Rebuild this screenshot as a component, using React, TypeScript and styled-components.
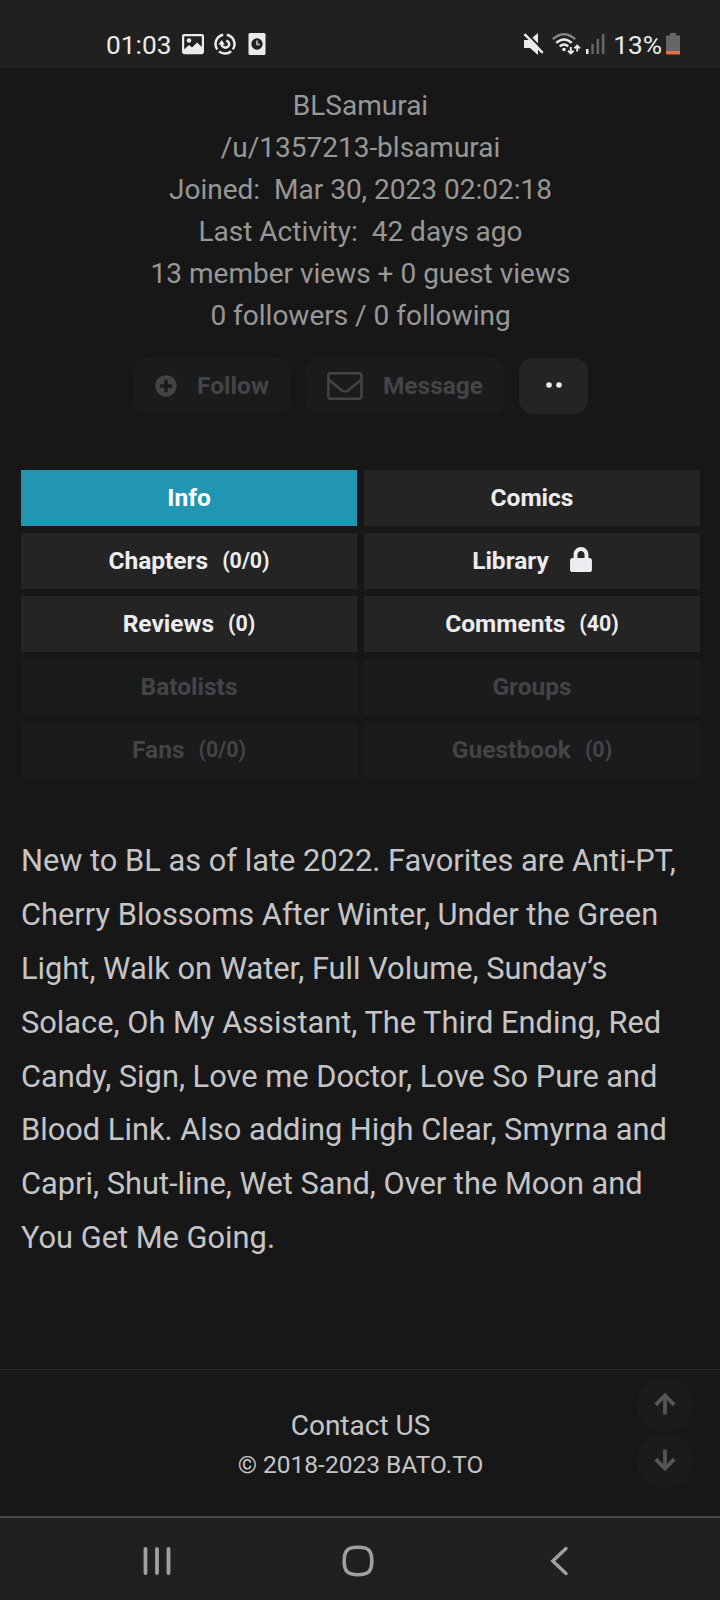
import React from "react";
import styled, { createGlobalStyle, css } from "styled-components";
import { FaLock, FaPlusCircle } from "react-icons/fa";

const GlobalStyle = createGlobalStyle`
  * { box-sizing: border-box; }
  body { margin: 0; background: #171717; font-family: Roboto, sans-serif; }
  button { font: inherit; border: 0; padding: 0; margin: 0; }
`;

const Screen = styled.div`
  width: 720px;
  height: 1600px;
  display: flex;
  flex-direction: column;
  background: #171717;
  position: relative;
  overflow: hidden;
`;

const StatusBar = styled.header`
  height: 68px;
  flex: none;
  background: #202020;
  color: #ebebeb;
  display: flex;
  justify-content: space-between;
  align-items: flex-start;
  padding: 30px 40px 0 106px;
`;

const StatusGroup = styled.div`
  display: flex;
  align-items: center;
  height: 28px;
  svg { display: block; flex: none; }
`;

const StatusIcon = styled.span<{ $left?: number }>`
  display: block;
  margin-left: ${(p) => p.$left ?? 0}px;
`;

const StatusText = styled.span<{ $left?: number }>`
  font-size: 26.3px;
  line-height: 30px;
  padding-top: 2px;
  margin-left: ${(p) => p.$left ?? 0}px;
`;

const Profile = styled.section`
  padding: 17px 0 0 1px;
  text-align: center;
  color: #979797;
  font-size: 28px;
  line-height: 42px;
  white-space: pre;
`;

const ProfileLine = styled.div``;

const Actions = styled.div`
  display: flex;
  justify-content: center;
  gap: 14px;
  margin-top: 21px;
`;

const ActionButton = styled.button<{ $width: number; $muted?: boolean }>`
  width: ${(p) => p.$width}px;
  height: 56px;
  border-radius: 14px;
  display: flex;
  align-items: center;
  justify-content: center;
  gap: 20px;
  padding-left: 1px;
  font-size: 24.5px;
  font-weight: 700;
  background: ${(p) => (p.$muted ? "#1a1b1c" : "#242424")};
  color: ${(p) => (p.$muted ? "#444446" : "#ececf1")};
`;

const ActionLabel = styled.span`
  padding-bottom: 2px;
`;

const Dots = styled.svg`
  margin-bottom: 2px;
`;

const Tabs = styled.nav`
  display: grid;
  grid-template-columns: 1fr 1fr;
  gap: 7px;
  margin: 56px 20px 0 21px;
`;

const Tab = styled.button<{ $state: "active" | "normal" | "muted" }>`
  height: 56px;
  display: flex;
  align-items: center;
  justify-content: center;
  padding-bottom: 2px;
  font-size: 24.5px;
  font-weight: 700;
  ${(p) =>
    p.$state === "active"
      ? css`background: #2196b3; color: #fff;`
      : p.$state === "normal"
      ? css`background: #242424; color: #ececf1;`
      : css`background: #1a1b1c; color: #444446;`}
`;

const Count = styled.span`
  font-size: 21.4px;
  font-weight: 700;
  margin-left: 14px;
`;

const LockIcon = styled(FaLock)`
  width: 22px;
  height: 25px;
  margin: 0 0 1px 21px;
`;

const Bio = styled.p`
  margin: 55.95px 21px 0;
  font-size: 30.8px;
  line-height: 53.9px;
  color: #c5c5c8;
  white-space: nowrap;
`;

const Footer = styled.footer`
  margin-top: 104px;
  border-top: 1px solid #292929;
  flex: 1;
  display: flex;
  flex-direction: column;
  align-items: center;
  padding: 35px 0 0 1px;
  color: #c5c5c8;
`;

const ContactLink = styled.div`
  font-size: 28px;
  line-height: 42px;
`;

const Copyright = styled.div`
  font-size: 24.5px;
  line-height: 36px;
`;

const ScrollButtons = styled.div`
  position: absolute;
  right: 27px;
  top: 1377px;
  display: flex;
  flex-direction: column;
`;

const ScrollButton = styled.button`
  width: 56px;
  height: 56px;
  border-radius: 50%;
  background: #1b1b1b;
  display: flex;
  align-items: center;
  justify-content: center;
  padding-bottom: 2px;
`;

const NavBar = styled.nav`
  height: 84px;
  flex: none;
  border-top: 2px solid #474747;
  background: #202020;
  display: grid;
  grid-template-columns: 199px 207px 1fr;
  align-items: center;
  padding: 4px 0 0 143px;
  svg { display: block; }
`;

const profileLines = [
  "BLSamurai",
  "/u/1357213-blsamurai",
  "Joined:  Mar 30, 2023 02:02:18",
  "Last Activity:  42 days ago",
  "13 member views + 0 guest views",
  "0 followers / 0 following",
];

type TabItem = {
  label: string;
  count?: string;
  locked?: boolean;
  state: "active" | "normal" | "muted";
};

const tabs: TabItem[] = [
  { label: "Info", state: "active" },
  { label: "Comics", state: "normal" },
  { label: "Chapters", count: "(0/0)", state: "normal" },
  { label: "Library", locked: true, state: "normal" },
  { label: "Reviews", count: "(0)", state: "normal" },
  { label: "Comments", count: "(40)", state: "normal" },
  { label: "Batolists", state: "muted" },
  { label: "Groups", state: "muted" },
  { label: "Fans", count: "(0/0)", state: "muted" },
  { label: "Guestbook", count: "(0)", state: "muted" },
];

const bioLines = [
  "New to BL as of late 2022. Favorites are Anti-PT,",
  "Cherry Blossoms After Winter, Under the Green",
  "Light, Walk on Water, Full Volume, Sunday’s",
  "Solace, Oh My Assistant, The Third Ending, Red",
  "Candy, Sign, Love me Doctor, Love So Pure and",
  "Blood Link. Also adding High Clear, Smyrna and",
  "Capri, Shut-line, Wet Sand, Over the Moon and",
  "You Get Me Going.",
];

const PictureIcon = () => (
  <svg width="22" height="22" viewBox="0 0 22 22">
    <rect x="1.1" y="2.1" width="19.8" height="18" rx="1" fill="none" stroke="#ebebeb" strokeWidth="2.2" />
    <circle cx="7" cy="7.5" r="2.3" fill="#ebebeb" />
    <path d="M2 16.5L7 12L10 14.5L15 9.5L20.5 14.5V20H2Z" fill="#ebebeb" />
  </svg>
);

const SwirlIcon = () => (
  <svg width="22" height="22" viewBox="0 0 22 22" fill="none" stroke="#ebebeb">
    <path d="M9.2 1.7A9.5 9.5 0 0 0 3.3 16.5" strokeWidth="2.5" />
    <path d="M5 18.4A9.5 9.5 0 0 0 17.2 18.2" strokeWidth="2.5" />
    <path d="M12.8 1.7A9.5 9.5 0 0 1 18.8 16.4" strokeWidth="2.5" />
    <path d="M7.5 11A4 4 0 0 0 15 12.5Q15.8 9 12.2 7.6" strokeWidth="2.5" />
    <path d="M4.2 11.5L7.7 7L10.8 11.5Z" fill="#ebebeb" stroke="none" />
  </svg>
);

const ClockCardIcon = () => (
  <svg width="18" height="22" viewBox="0 0 18 22">
    <rect x="0.5" width="17" height="22" rx="1.5" fill="#ebebeb" />
    <circle cx="9" cy="11" r="5.7" fill="#202020" />
    <path d="M9 7.5V11.5H12" fill="none" stroke="#bdbdbd" strokeWidth="1.7" />
  </svg>
);

const MuteIcon = () => (
  <svg width="20" height="22" viewBox="0 0 20 22">
    <path d="M0 7H5.5L14 0V22L6 15H0Z" fill="#ebebeb" />
    <path d="M1.5 -1L21 19" stroke="#202020" strokeWidth="2" />
    <path d="M0.5 1L18.7 19.8" stroke="#ebebeb" strokeWidth="2.5" />
  </svg>
);

const WifiIcon = () => (
  <svg width="29" height="23" viewBox="0 0 29 23" fill="none" strokeWidth="2.3">
    <path d="M0.8 6.2Q12 -3.7 23.2 6.2" stroke="#858585" />
    <path d="M4.2 9.9Q12 3 19.8 9.9" stroke="#ebebeb" />
    <path d="M7.7 13.3Q12 9.6 16.3 13.3" stroke="#ebebeb" />
    <circle cx="12" cy="16.5" r="1.8" fill="#ebebeb" />
    <path d="M18.8 14V20M16 17.8L18.8 20.5L21.6 17.8" stroke="#ebebeb" strokeWidth="1.9" />
    <path d="M25.2 18.5V13M22.4 15.3L25.2 12.5L28 15.3" stroke="#ebebeb" strokeWidth="1.9" />
  </svg>
);

const SignalIcon = () => (
  <svg width="19" height="22" viewBox="0 0 19 22">
    <rect x="0" y="16" width="2.5" height="5" fill="#ebebeb" />
    <rect x="5.3" y="11" width="2.5" height="10" fill="#666" />
    <rect x="10.6" y="6" width="2.5" height="15" fill="#666" />
    <rect x="15.9" y="1" width="2.5" height="20" fill="#666" />
  </svg>
);

const BatteryIcon = () => (
  <svg width="14" height="22" viewBox="0 0 14 22">
    <path d="M4 0H10V2.5H13Q14 2.5 14 3.5V18H0V3.5Q0 2.5 1 2.5H4Z" fill="#666" />
    <path d="M0 18H14V20.5Q14 21.5 13 21.5H1Q0 21.5 0 20.5Z" fill="#e2704a" />
  </svg>
);

const EnvelopeIcon = () => (
  <svg width="36" height="28" viewBox="0 0 36 28" fill="none" stroke="currentColor" strokeWidth="2.5">
    <rect x="1.3" y="1.3" width="33.2" height="25.4" rx="2.4" />
    <path d="M1.5 7.5L14.2 18Q17.9 21 21.6 18L34.3 7.5" />
  </svg>
);

const ArrowIcon = ({ down = false }: { down?: boolean }) => (
  <svg width="22" height="24" viewBox="0 0 22 24" fill="none" stroke="#555" strokeWidth="3.8">
    {down ? <path d="M11 1.5V20.5M1.7 11.2L11 20.5L20.3 11.2" /> : <path d="M11 22.5V3.5M1.7 12.8L11 3.5L20.3 12.8" />}
  </svg>
);

export default function App() {
  return (
    <Screen>
      <GlobalStyle />
      <StatusBar>
        <StatusGroup>
          <StatusText>01:03</StatusText>
          <StatusIcon $left={10}><PictureIcon /></StatusIcon>
          <StatusIcon $left={10}><SwirlIcon /></StatusIcon>
          <StatusIcon $left={12}><ClockCardIcon /></StatusIcon>
        </StatusGroup>
        <StatusGroup>
          <StatusIcon><MuteIcon /></StatusIcon>
          <StatusIcon $left={8}><WifiIcon /></StatusIcon>
          <StatusIcon $left={5}><SignalIcon /></StatusIcon>
          <StatusText $left={8}>13%</StatusText>
          <StatusIcon $left={4}><BatteryIcon /></StatusIcon>
        </StatusGroup>
      </StatusBar>

      <Profile>
        {profileLines.map((line) => (
          <ProfileLine key={line}>{line}</ProfileLine>
        ))}
      </Profile>

      <Actions>
        <ActionButton $width={158} $muted>
          <FaPlusCircle size={22} />
          <ActionLabel>Follow</ActionLabel>
        </ActionButton>
        <ActionButton $width={200} $muted>
          <EnvelopeIcon />
          <ActionLabel>Message</ActionLabel>
        </ActionButton>
        <ActionButton $width={69}>
          <Dots width="16" height="6" viewBox="0 0 16 6" fill="currentColor">
            <circle cx="3" cy="3" r="2.8" />
            <circle cx="13" cy="3" r="2.8" />
          </Dots>
        </ActionButton>
      </Actions>

      <Tabs>
        {tabs.map((tab) => (
          <Tab key={tab.label} $state={tab.state}>
            {tab.label}
            {tab.count && <Count>{tab.count}</Count>}
            {tab.locked && <LockIcon />}
          </Tab>
        ))}
      </Tabs>

      <Bio>
        {bioLines.map((line) => (
          <React.Fragment key={line}>
            {line}
            <br />
          </React.Fragment>
        ))}
      </Bio>

      <Footer>
        <ContactLink>Contact US</ContactLink>
        <Copyright>© 2018-2023 BATO.TO</Copyright>
      </Footer>

      <ScrollButtons>
        <ScrollButton aria-label="Scroll to top"><ArrowIcon /></ScrollButton>
        <ScrollButton aria-label="Scroll to bottom"><ArrowIcon down /></ScrollButton>
      </ScrollButtons>

      <NavBar>
        <svg width="28" height="32" viewBox="0 0 28 32" stroke="#a0a0a0" strokeWidth="3.8" strokeLinecap="round">
          <path d="M2.5 4V28M14 4V28M25.5 4V28" />
        </svg>
        <svg width="32" height="32" viewBox="0 0 32 32" fill="none" stroke="#a0a0a0" strokeWidth="3.6">
          <path d="M16 2.3C26.5 2.3 29.8 5.5 29.8 16S26.5 29.7 16 29.7S2.2 26.5 2.2 16S5.5 2.3 16 2.3Z" />
        </svg>
        <svg width="20" height="32" viewBox="-1 0 20 32" fill="none" stroke="#a0a0a0" strokeWidth="3.4" strokeLinecap="round">
          <path d="M16 3.5L2.8 16L16 28.5" />
        </svg>
      </NavBar>
    </Screen>
  );
}
